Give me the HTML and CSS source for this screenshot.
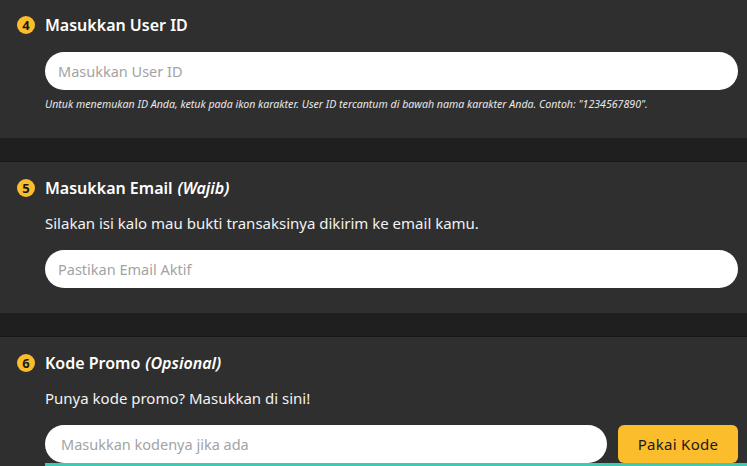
FILE: index.html
```html
<!DOCTYPE html>
<html lang="id">
<head>
    <meta charset="UTF-8">
    <meta name="viewport" content="width=device-width, initial-scale=1.0">
    <title>Top Up</title>
    <link rel="stylesheet" href="styles.css">
</head>
<body>
    <div class="form">
        <div class="card first">
            <div class="card-title"><span class="step">4</span>Masukkan User ID</div>
            <div class="card-body">
                <input class="field" type="text" placeholder="Masukkan User ID">
                <p class="hint">Untuk menemukan ID Anda, ketuk pada ikon karakter. User ID tercantum di bawah nama karakter Anda. Contoh: "1234567890".</p>
            </div>
        </div>
        <div class="card">
            <div class="card-title"><span class="step">5</span>Masukkan Email <em>(Wajib)</em></div>
            <div class="card-body">
                <p class="desc">Silakan isi kalo mau bukti transaksinya dikirim ke email kamu.</p>
                <input class="field" type="email" placeholder="Pastikan Email Aktif">
            </div>
        </div>
        <div class="card">
            <div class="card-title"><span class="step">6</span>Kode Promo <em>(Opsional)</em></div>
            <div class="card-body">
                <p class="desc">Punya kode promo? Masukkan di sini!</p>
                <div class="promo-row">
                    <input class="field promo" type="text" placeholder="Masukkan kodenya jika ada">
                    <button class="btn-promo">Pakai Kode</button>
                </div>
            </div>
        </div>
    </div>
    <div class="bottom-line"></div>
</body>
</html>
```

FILE: styles.css
```css
body {
    margin: 0;
    background-color: #1f1f1f;
    font-family: "Noto Sans", Arial, sans-serif;
    color: #fff;
    overflow: hidden;
}
.form {
    display: flex;
    flex-direction: column;
    gap: 24px;
}
.card {
    background-color: #2f2f2f;
    padding: 16px 9px 25px 17px;
    box-shadow: 0 -1px 0 #171717;
}
.card.first {
    padding-top: 15px;
    padding-bottom: 27px;
}
.card-title {
    display: flex;
    align-items: center;
    font-size: 16px;
    font-weight: 600;
    line-height: 20px;
    height: 20px;
}
.card-title em {
    margin-left: 5px;
}
.step {
    width: 18px;
    height: 18px;
    border-radius: 50%;
    background-color: #fbbd2c;
    color: #1a1a1a;
    font-size: 13px;
    font-weight: 700;
    line-height: 18px;
    text-align: center;
    margin-right: 10px;
    flex-shrink: 0;
}
.card-body {
    padding-left: 28px;
}
.field {
    display: block;
    width: 100%;
    box-sizing: border-box;
    height: 38px;
    margin-top: 17px;
    border: none;
    border-radius: 19px;
    background-color: #fff;
    padding: 0 13px;
    font-family: inherit;
    font-size: 14.5px;
    color: #333;
    outline: none;
}
.field::placeholder {
    color: #a3a3a3;
}
.hint {
    margin: 7px 0 0;
    font-size: 10.6px;
    font-style: italic;
    line-height: 14px;
    color: #e8e8e8;
}
.desc {
    margin: 15px 0 0;
    font-size: 15px;
    line-height: 20px;
    color: #f2f2f2;
}
.promo-row {
    display: flex;
    gap: 11px;
    margin-top: 17px;
}
.promo-row .field {
    margin-top: 0;
    flex: 1;
    padding-left: 16px;
}
.btn-promo {
    width: 120px;
    height: 38px;
    border: none;
    border-radius: 6px;
    background-color: #fbbd2c;
    color: #1a1a1a;
    font-family: inherit;
    font-size: 15px;
    letter-spacing: 0.3px;
    cursor: pointer;
}
.bottom-line {
    position: fixed;
    left: 45px;
    right: 0;
    bottom: 0;
    height: 3px;
    background-color: #3ec9b2;
}
```
